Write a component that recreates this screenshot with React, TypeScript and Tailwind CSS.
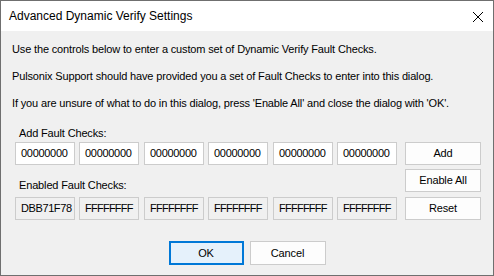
export default function App() {
  const addValues = ["00000000", "00000000", "00000000", "00000000", "00000000", "00000000"];
  const enabledValues = ["DBB71F78", "FFFFFFFF", "FFFFFFFF", "FFFFFFFF", "FFFFFFFF", "FFFFFFFF"];
  const gaps = ["", "ml-[4px]", "ml-[5px]", "ml-[4px]", "ml-[5px]", "ml-[4px]"];

  return (
    <div
      className="flex h-[276px] w-[494px] flex-col border border-[#6f6f6f] text-[11px] tracking-[-0.15px] text-black"
      style={{ fontFamily: '"Liberation Sans", Arial, sans-serif' }}
    >
      {/* title bar */}
      <div className="flex h-[30px] items-center justify-between bg-white pl-[8px] pr-[9px]">
        <span className="text-[12px] leading-none tracking-normal">Advanced Dynamic Verify Settings</span>
        <svg width="12" height="12" viewBox="0 0 12 12" className="mt-[1px]">
          <path d="M1 1 L11 11 M11 1 L1 11" stroke="#000" strokeWidth="1" />
        </svg>
      </div>

      {/* body */}
      <div className="flex flex-1 flex-col bg-[#f0f0f0] pt-[11px]">
        <div className="flex flex-col gap-[12px] pl-[11px] leading-[15px]">
          <p>Use the controls below to enter a custom set of Dynamic Verify Fault Checks.</p>
          <p>Pulsonix Support should have provided you a set of Fault Checks to enter into this dialog.</p>
          <p>If you are unsure of what to do in this dialog, press 'Enable All' and close the dialog with 'OK'.</p>
        </div>

        <div className="mt-[15px] flex pl-[14px]">
          <div className="flex flex-col">
            <div className="pl-[4px] leading-[15px]">Add Fault Checks:</div>
            <div className="mt-[1px] flex">
              {addValues.map((v, i) => (
                <div
                  key={i}
                  className={`flex h-[23px] w-[60px] items-center border border-[#cccccc] bg-white pl-[5px] tracking-[-0.3px] ${gaps[i]}`}
                >
                  {v}
                </div>
              ))}
            </div>
            <div className="mt-[13px] pl-[4px] leading-[15px]">Enabled Fault Checks:</div>
            <div className="mt-[4px] flex">
              {enabledValues.map((v, i) => (
                <div
                  key={i}
                  className={`flex h-[23px] w-[60px] items-center overflow-hidden border border-[#cccccc] bg-[#f0f0f0] pl-[5px] ${
                    i === 0 ? "tracking-[-0.4px]" : "tracking-[-0.75px]"
                  } ${gaps[i]}`}
                >
                  {v}
                </div>
              ))}
            </div>
          </div>

          <div className="ml-[8px] mt-[16px] flex flex-col">
            <button className="h-[23px] w-[76px] border border-[#cccccc] bg-[#fdfdfd]">Add</button>
            <button className="mt-[4px] h-[23px] w-[76px] border border-[#cccccc] bg-[#fdfdfd]">
              Enable All
            </button>
            <button className="mt-[5px] h-[23px] w-[76px] border border-[#cccccc] bg-[#fdfdfd]">Reset</button>
          </div>
        </div>

        <div className="mt-[21px] flex justify-center gap-[6px]">
          <button className="h-[24px] w-[75px] border-2 border-[#0078d7] bg-[#e5f1fb]">OK</button>
          <button className="h-[24px] w-[76px] border border-[#cccccc] bg-[#fdfdfd]">Cancel</button>
        </div>
      </div>
    </div>
  );
}
